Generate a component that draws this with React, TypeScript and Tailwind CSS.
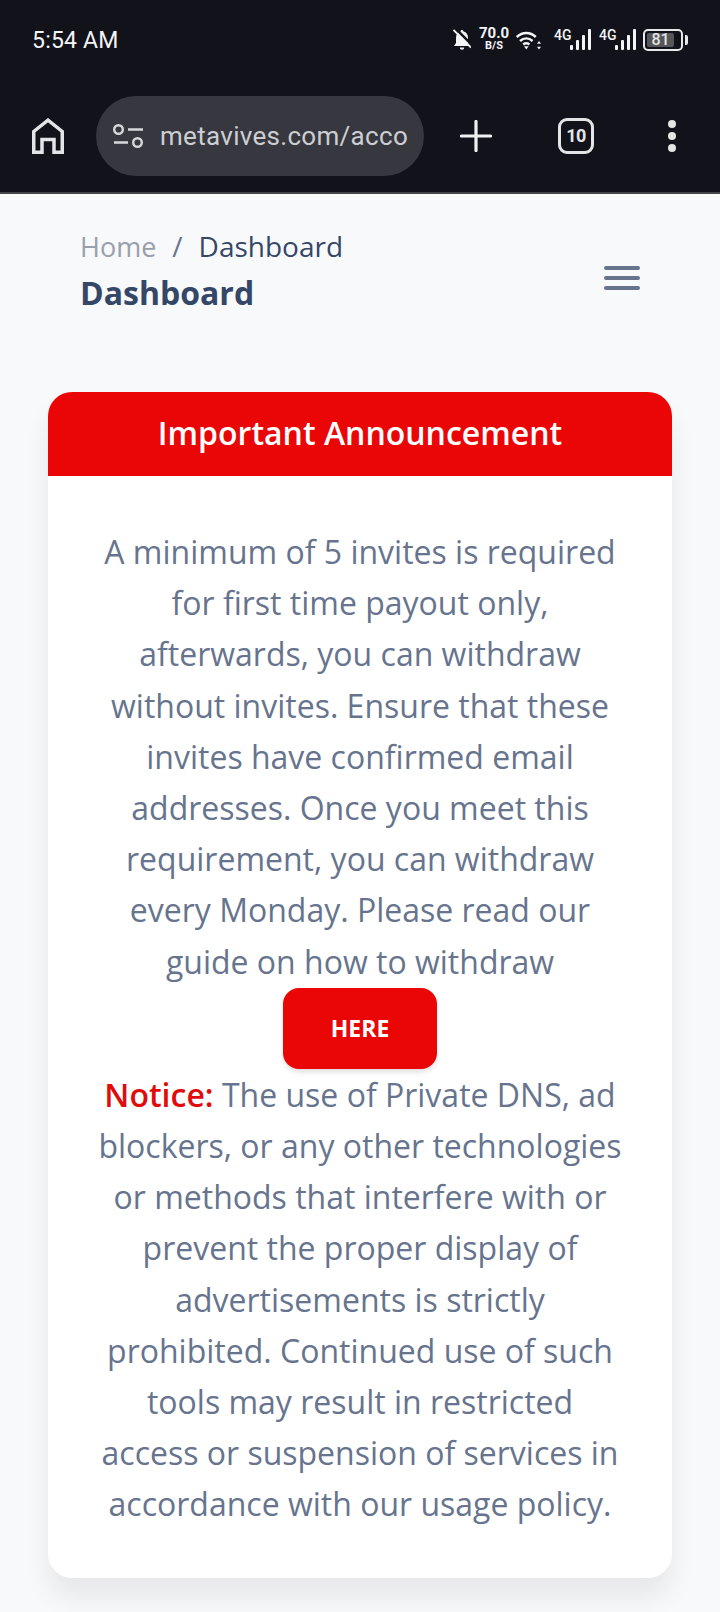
import React from "react";

function Signal() {
  return (
    <div className="relative h-[22px] w-[37px]">
      <span className="absolute left-0 top-[-1px] text-[14px] font-medium leading-[14px] text-[#f4f4f6]">4G</span>
      <svg width="21" height="21" viewBox="0 0 21 21" className="absolute left-[16px] top-0" fill="#f4f4f6">
        <rect x="0" y="16" width="3" height="5" rx="1" />
        <rect x="6" y="11" width="3" height="10" rx="1" />
        <rect x="12" y="6" width="3" height="15" rx="1" />
        <rect x="18" y="0" width="3" height="21" rx="1" />
      </svg>
    </div>
  );
}

function StatusBar() {
  return (
    <div className="flex h-[82px] items-start justify-between pl-[32px] pr-[32px] pt-[26px] font-['Roboto',sans-serif] text-white">
      <span className="text-[23px] leading-[30px] tracking-[0.2px] text-[#f4f4f6]">5:54 AM</span>
      <div className="flex items-start pt-[3px]">
        <svg width="18" height="22" viewBox="0 0 18 22" className="mr-[9px]" fill="#f4f4f6">
          <path d="M9 1c.8 0 1.400.6 1.500 1.500C13.500 3.300 15 5.500 15 8.500V14l2 3H1l2-3V8.500C3 5.500 4.500 3.300 7.500 2.500 7.600 1.600 8.200 1 9 1z" />
          <path d="M6.800 18.600h4.400a2.200 2.200 0 0 1-4.400 0z" />
          <path d="M2 -1 21 18" stroke="#11121a" strokeWidth="2.500" fill="none" />
          <path d="M0.500 1 18 18.500" stroke="#f4f4f6" strokeWidth="1.800" fill="none" />
        </svg>
        <div className="mr-[8px] mt-[-3px] flex w-[28px] flex-col items-center whitespace-nowrap text-center font-bold text-[#f4f4f6]">
          <span className="text-[15px] leading-[14px]">70.0</span>
          <span className="text-[11px] leading-[11px]">B/S</span>
        </div>
        <svg width="25" height="20" viewBox="0 0 25 20" className="mr-[13px] mt-[1px]" fill="none" stroke="#f4f4f6" strokeWidth="2.500">
          <path d="M0.800 7c5.600-5.400 13.400-5.400 19 0" />
          <path d="M4 11c3.900-3.500 8.700-3.500 12.600 0" />
          <path d="M7.200 14.500c2.100-1.600 4.100-1.600 6.200 0" />
          <path d="M8 16.200h4.600l-2.300 3.300z" fill="#f4f4f6" stroke="none" />
          <path d="M23 11l2 2.800h-4zM23 19.500l2-2.800h-4z" fill="#f4f4f6" stroke="none" />
        </svg>
        <div className="mr-[8px]"><Signal /></div>
        <div className="mr-[7px]"><Signal /></div>
        <div className="flex h-[22px] w-[40px] items-center rounded-[5px] border-2 border-[#e8e8ea] pl-[2px]">
          <div className="flex h-[14px] w-[27px] items-center justify-center rounded-[2px] bg-[#55565a] text-[16px] font-medium leading-none text-[#e4e4e4]">81</div>
        </div>
        <div className="ml-[2px] mt-[6px] h-[10px] w-[3px] rounded-r-[2px] bg-[#e8e8ea]" />
      </div>
    </div>
  );
}

function Toolbar() {
  return (
    <div className="flex h-[110px] items-start pl-[32px] pt-[14px] text-[#e8e8ea]">
      <svg width="32" height="36" viewBox="0 0 32 36" className="mt-[22px]" fill="none" stroke="#e4e4e8" strokeWidth="3.500">
        <path d="M1.750 34.250V13.500L16 2.200l14.250 11.300v20.750H22V21.500H10v12.750z" />
      </svg>
      <div className="ml-[32px] flex h-[80px] w-[328px] items-center rounded-full bg-[#37383f] pl-[17px]">
        <svg width="30" height="24" viewBox="0 0 30 24" fill="none" stroke="#d8d8dc" strokeWidth="2.400">
          <circle cx="5.500" cy="5.500" r="4.300" />
          <path d="M15 5.500h15M1 18.500h14" />
          <circle cx="24.500" cy="18.500" r="4.300" />
        </svg>
        <div className="ml-[17px] w-[250px] whitespace-nowrap font-['Roboto',sans-serif] text-[26px] leading-[34px] tracking-[0.300px] text-[#cdced2]">
          metavives.com/acco
        </div>
      </div>
      <svg width="32" height="32" viewBox="0 0 32 32" className="ml-[36px] mt-[24px]" stroke="#f0f0f2" strokeWidth="3.200" strokeLinecap="round">
        <path d="M16 1.500v29M1.500 16h29" />
      </svg>
      <div className="ml-[66px] mt-[22px] flex h-[36px] w-[36px] items-center justify-center rounded-[9px] border-[3.500px] border-[#e4e4e6] font-['Roboto',sans-serif] text-[18px] font-bold leading-none tracking-[-0.5px] text-[#e4e4e6]">
        10
      </div>
      <div className="ml-[74px] mt-[24px] flex flex-col gap-[4px]">
        <span className="h-[8px] w-[8px] rounded-full bg-[#e4e4e6]" />
        <span className="h-[8px] w-[8px] rounded-full bg-[#e4e4e6]" />
        <span className="h-[8px] w-[8px] rounded-full bg-[#e4e4e6]" />
      </div>
    </div>
  );
}

export default function App() {
  return (
    <div className="h-[1612px] w-[720px] overflow-hidden bg-[#f8f9fa] font-['Open_Sans',sans-serif]">
      <div className="h-[194px] border-b-2 border-[#44454a] bg-[#11121a]">
        <StatusBar />
        <Toolbar />
      </div>

      <div className="flex items-center justify-between pl-[80px] pr-[80px] pt-[30px]">
        <div>
          <div className="flex items-baseline text-[28px] leading-[44px]">
            <span className="text-[27px] text-[#9aa0ab]">Home</span>
            <span className="mx-[16px] text-[#67748e]">/</span>
            <span className="text-[#344767]">Dashboard</span>
          </div>
          <h1 className="text-[32px] font-bold leading-[48px] text-[#344767]">Dashboard</h1>
        </div>
        <div className="mt-[14px] flex w-[36px] flex-col gap-[6px]">
          <span className="h-[4px] rounded-full bg-[#67748e]" />
          <span className="h-[4px] rounded-full bg-[#67748e]" />
          <span className="h-[4px] rounded-full bg-[#67748e]" />
        </div>
      </div>

      <div className="mx-[48px] mt-[75px] h-[1186px] rounded-[24px] bg-white shadow-[0_20px_27px_0_rgba(0,0,0,0.07)]">
        <div className="flex h-[84px] items-center justify-center rounded-t-[24px] bg-[#ea0606] pb-[2px] text-[32px] font-semibold text-white">
          Important Announcement
        </div>
        <div className="px-[48px] pt-[50px] text-center text-[32px] leading-[51.200px] text-[#67748e]">
          <p>
            A minimum of 5 invites is required for first time payout only, afterwards, you can withdraw without
            invites. Ensure that these invites have confirmed email addresses. Once you meet this requirement, you
            can withdraw every Monday. Please read our guide on how to withdraw
          </p>
          <div className="mt-[1px] flex justify-center">
            <button className="h-[81px] w-[154px] rounded-[16px] bg-[#ea0606] text-[23px] font-bold text-white shadow-[0_4px_7px_-1px_rgba(0,0,0,0.11),0_2px_4px_-1px_rgba(0,0,0,0.07)]">
              HERE
            </button>
          </div>
          <p>
            <strong className="font-semibold text-[#e00b0b]">Notice:</strong> The use of Private DNS, ad blockers, or
            any other technologies or methods that interfere with or prevent the proper display of advertisements
            is strictly prohibited. Continued use of such tools may result in restricted access or suspension of
            services in accordance with our usage policy.
          </p>
        </div>
      </div>
    </div>
  );
}
